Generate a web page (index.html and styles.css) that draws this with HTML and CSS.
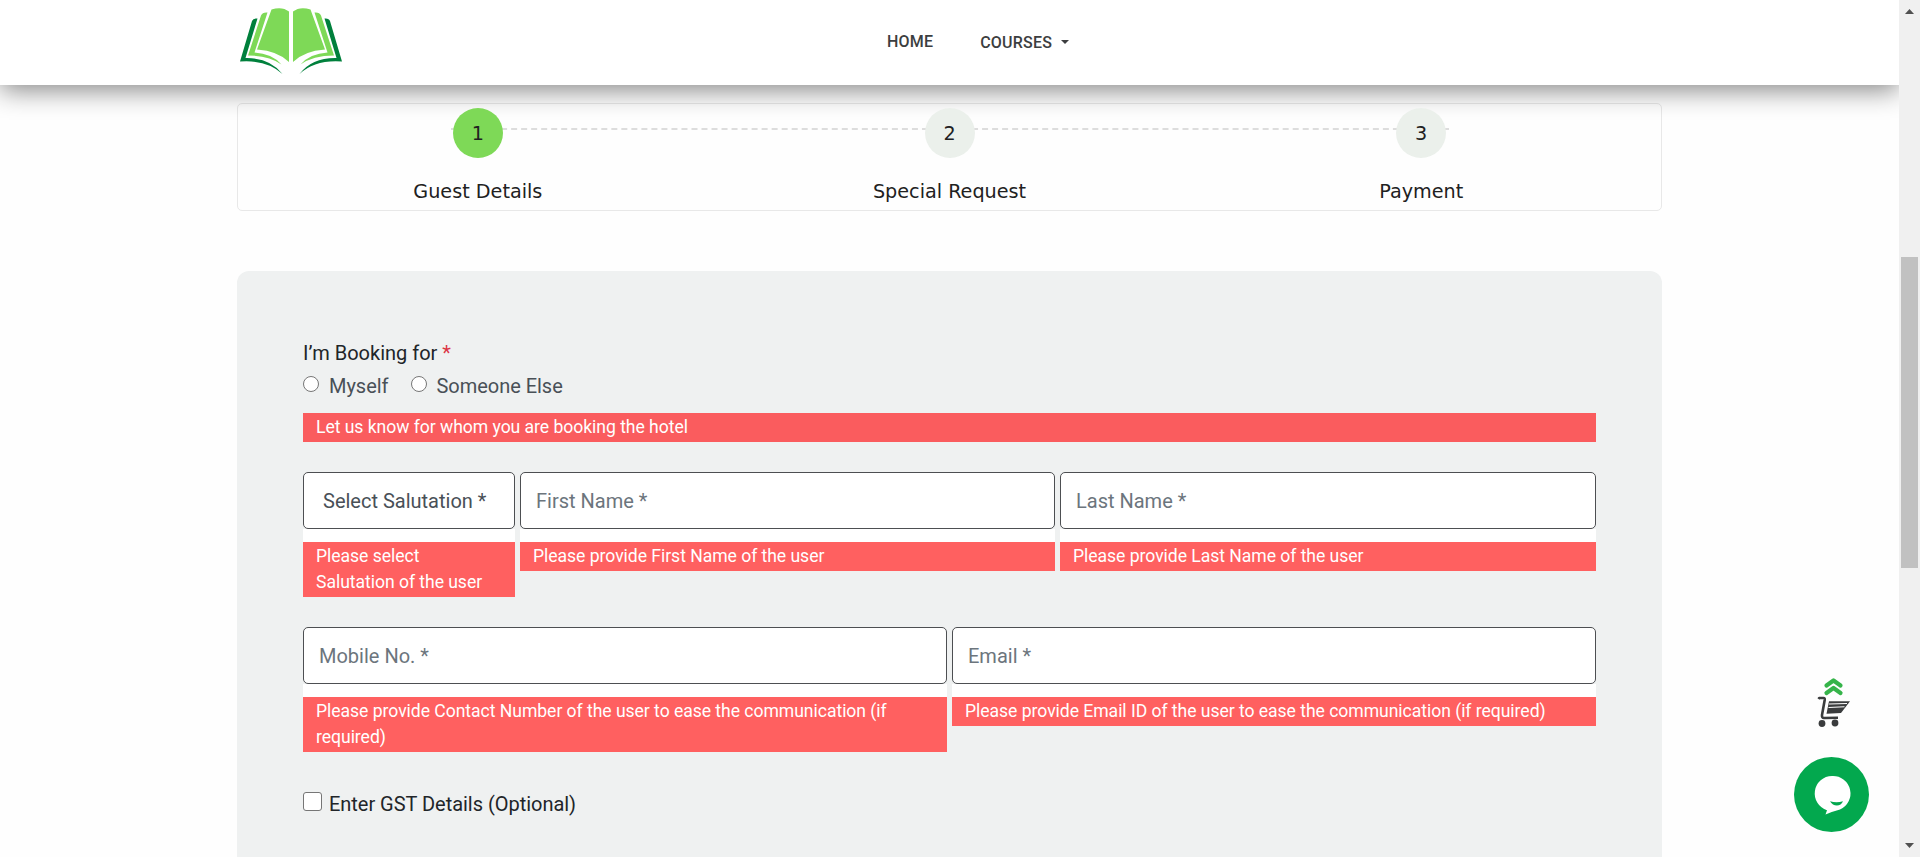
FILE: index.html
```html
<!DOCTYPE html>
<html lang="en">
<head>
<meta charset="utf-8">
<title>Booking</title>
<link rel="stylesheet" href="styles.css">
</head>
<body>
<div class="viewport">
  <div class="page">
    <header class="header">
      <svg class="logo" width="102" height="67" viewBox="0 0 102 67">
        <g fill="#7ed957">
          <path d="M31.500 2.500 Q42 -1 49 4.500 V55 Q38 44 17 42.500Z"/>
          <path d="M27.500 5.500 Q22.500 5 21 8.500 L8 48.500 Q29 48.500 41.500 57.500 Q32 46.500 14.500 45.500Z"/>
        </g>
        <path fill="#00803c" d="M17.500 11.500 Q13 11 12 14 L0 54.500 Q27 52.500 42.500 67 Q30 50.500 5.500 51Z"/>
        <g transform="translate(102 0) scale(-1 1)">
          <path fill="#7ed957" d="M31.500 2.500 Q42 -1 49 4.500 V55 Q38 44 17 42.500Z"/>
          <path fill="#7ed957" d="M27.500 5.500 Q22.500 5 21 8.500 L8 48.500 Q29 48.500 41.500 57.500 Q32 46.500 14.500 45.500Z"/>
          <path fill="#00803c" d="M17.500 11.500 Q13 11 12 14 L0 54.500 Q27 52.500 42.500 67 Q30 50.500 5.500 51Z"/>
        </g>
      </svg>
      <nav class="nav">
        <a class="nav-home">HOME</a>
        <a class="nav-courses">COURSES<span class="caret"></span></a>
      </nav>
    </header>
    <main class="main">
      <section class="stepper">
        <div class="step"><span class="dot dot-active">1</span><span class="step-label">Guest Details</span></div>
        <div class="step"><span class="dot">2</span><span class="step-label">Special Request</span></div>
        <div class="step"><span class="dot">3</span><span class="step-label">Payment</span></div>
      </section>
      <form class="panel">
        <div class="label">I’m Booking for <span class="required">*</span></div>
        <div class="radios">
          <label class="radio"><span class="radio-mark"></span><span>Myself</span></label>
          <label class="radio"><span class="radio-mark"></span><span>Someone Else</span></label>
        </div>
        <div class="error error-booking">Let us know for whom you are booking the hotel</div>
        <div class="row row-names">
          <div class="field"><div class="input select">Select Salutation *</div><div class="error">Please select Salutation of the user</div></div>
          <div class="field"><div class="input">First Name *</div><div class="error">Please provide First Name of the user</div></div>
          <div class="field"><div class="input">Last Name *</div><div class="error">Please provide Last Name of the user</div></div>
        </div>
        <div class="row row-contact">
          <div class="field"><div class="input">Mobile No. *</div><div class="error">Please provide Contact Number of the user to ease the communication (if required)</div></div>
          <div class="field"><div class="input">Email *</div><div class="error">Please provide Email ID of the user to ease the communication (if required)</div></div>
        </div>
        <label class="gst"><span class="checkbox"></span><span>Enter GST Details (Optional)</span></label>
      </form>
    </main>
  </div>
  <aside class="scrollbar">
    <svg width="21" height="21" viewBox="0 0 21 21"><path d="M6 14 L10.500 9 L15 14Z" fill="#505050"/></svg>
    <div class="thumb"></div>
    <svg class="down" width="21" height="21" viewBox="0 0 21 21"><path d="M6 7 L10.500 12 L15 7Z" fill="#505050"/></svg>
  </aside>
</div>
<div class="floating">
  <svg width="36" height="52" viewBox="0 0 36 52">
    <g fill="none" stroke="#36b44a" stroke-width="4.200" stroke-linecap="round" stroke-linejoin="round">
      <path d="M10.500 8.500 L17.500 3.500 L24.500 8.500 M10.500 16 L17.500 11 L24.500 16"/>
    </g>
    <path d="M2.500 22 L3.200 21 H7.500 Q9 21 8.700 23 L6 38 Q5.700 41 8 41 L22 40.800" fill="none" stroke="#3a3c3d" stroke-width="2.600" stroke-linejoin="round"/>
    <path d="M13 24.200 H34 L25 36 L10.500 36.700Z" fill="#3a3c3d"/>
    <path d="M13 27 L31 26.500 M12.500 30.500 L28.500 29.700" stroke="#fff" stroke-width="1.100"/>
    <circle cx="6" cy="46.500" r="3.400" fill="#3a3c3d"/><circle cx="19" cy="46" r="3.400" fill="#3a3c3d"/>
  </svg>
  <svg width="75" height="75" viewBox="0 0 75 75">
    <circle cx="37.500" cy="37.500" r="37.500" fill="#03a84e"/>
    <path d="M38 19 A17.500 17.500 0 0 1 46 52.500 Q40 54 31.500 57.500 L33 53.200 A17.500 17.500 0 0 1 38 19Z" fill="#fff"/>
    <path d="M36 44.300 Q42.500 46 49 44.300 C47 50 39 50 36 44.300Z" fill="#03a84e"/>
  </svg>
</div>
</body>
</html>
```

FILE: styles.css
```css
* { box-sizing: border-box; }
body { margin: 0; background: #fff; color: #212529; font: 400 20px/30px Roboto, sans-serif; overflow: hidden; }
.viewport { display: flex; height: 857px; }
.page { flex: 1; height: 857px; overflow: hidden; background: #fefefe; }
.header { position: relative; z-index: 1; height: 85px; padding: 7px 0 0 240px; display: flex; gap: 545px; background: #fff; box-shadow: 0 5px 25px rgba(0, 0, 0, .48); }
.logo { flex: none; }
.nav { display: flex; gap: 47px; color: #3c3e40; font-size: 16px; font-weight: 500; line-height: 24px; letter-spacing: .2px; }
.nav-home { padding-top: 23px; }
.nav-courses { padding-top: 24px; display: flex; gap: 9px; }
.caret { width: 8px; height: 4px; margin-top: 9px; border: 4px solid transparent; border-top-color: #3c3e40; border-bottom: 0; }
.main { padding: 18px 237px 0; }
.stepper { position: relative; height: 108px; width: 1425px; padding: 4px 4px 0; border: 1px solid #e8e8e8; border-radius: 5px; display: flex; }
.stepper::before { content: ""; position: absolute; top: 24px; left: 213px; width: 998px; border-top: 2px dashed #ddd; }
.step { flex: 1; display: flex; flex-direction: column; align-items: center; color: #212121; font: 19.2px/24px "DejaVu Sans", sans-serif; }
.dot { position: relative; z-index: 1; width: 50px; height: 50px; border-radius: 50%; background: #ebf0eb; line-height: 51px; text-align: center; }
.dot-active { background: #7ed957; }
.step-label { margin-top: 22px; }
.panel { width: 1425px; height: 600px; margin-top: 60px; padding: 67px 66px 0; border-radius: 12px; background: #eff1f1; }
.required { color: #dc3545; }
.radios { display: flex; gap: 22px; height: 30px; margin-top: 3px; color: #495057; }
.radio { display: flex; gap: 10px; letter-spacing: -.03px; }
.radio-mark { width: 16px; height: 16px; margin-top: 5px; border: 1px solid #767676; border-radius: 50%; background: #fff; }
.error { padding: 1px 20px 2px 13px; background: #ff6060; color: #fff; font-size: 17.6px; line-height: 26px; letter-spacing: -.05px; }
.error-booking { margin-top: 12px; background: #fa5c5e; }
.row { display: grid; gap: 5px; }
.row-names { grid-template-columns: 212px 535px 536px; margin-top: 30px; }
.row-contact { grid-template-columns: 1fr 1fr; margin-top: 30px; }
.input { height: 57px; padding: 0 15px; border: 1px solid #4d4f52; border-radius: 5px; background: #fff; color: #6c757d; line-height: 56px; }
.field { display: grid; grid-template-rows: 57px auto; align-content: start; row-gap: 13px; background: linear-gradient(#fff, #fff) 0 57px / 100% 13px no-repeat; }
.input.select { padding-left: 19px; color: #495057; }
.gst { display: flex; gap: 7px; margin-top: 37px; letter-spacing: -.03px; }
.checkbox { width: 19px; height: 19px; margin-top: 3px; border: 1px solid #767676; border-radius: 3px; background: #fff; }
.scrollbar { width: 21px; background: #f0f0f0; display: flex; flex-direction: column; }
.thumb { width: 17px; height: 311px; margin: 236px 0 0 2px; background: #c1c1c1; }
.down { margin-top: auto; }
.floating { position: fixed; left: 1794px; top: 677px; display: flex; flex-direction: column; gap: 28px; }
.floating svg:first-child { margin-left: 22px; }
```
